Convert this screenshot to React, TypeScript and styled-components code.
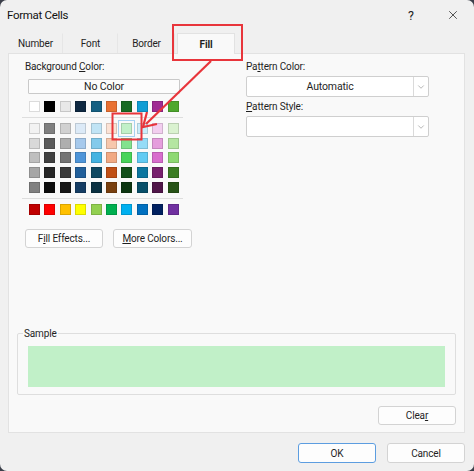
import React from "react";
import styled, { createGlobalStyle } from "styled-components";
import { ChevronDown, X } from "lucide-react";

const GlobalStyle = createGlobalStyle`
  html, body {
    margin: 0;
    padding: 0;
    background: #3b3f4a;
  }
  * {
    box-sizing: border-box;
  }
`;

const Dialog = styled.div`
  position: relative;
  width: 474px;
  height: 471px;
  background: #f0f0f0;
  border-radius: 7px;
  overflow: hidden;
  display: flex;
  flex-direction: column;
  font-family: "Roboto", "Noto Sans", sans-serif;
  font-size: 10px;
  letter-spacing: -0.15px;
  color: #1f1f1f;
`;

const TitleBar = styled.div`
  height: 30px;
  display: flex;
  align-items: center;
  padding: 0 14px 0 7px;
`;

const Title = styled.div`
  flex: 1;
  font-size: 11.5px;
  letter-spacing: -0.3px;
  color: #111;
`;

const TitleButton = styled.div<{ $width: number }>`
  width: ${(p) => p.$width}px;
  display: flex;
  justify-content: center;
  align-items: center;
  font-size: 12.5px;
  color: #222;
`;

const TabStrip = styled.div`
  margin: 3px 0 0 8px;
  height: 20px;
  display: flex;
  align-items: stretch;
  position: relative;
  z-index: 1;
`;

const Tab = styled.div<{ $width: number; $active?: boolean }>`
  width: ${(p) => p.$width}px;
  display: flex;
  align-items: center;
  justify-content: center;
  margin-left: ${(p) => (p.$active ? "2px" : "0")};
  background: ${(p) => (p.$active ? "#f9f9f9" : "transparent")};
  border: 1px solid ${(p) => (p.$active ? "#e2e2e2" : "transparent")};
  border-bottom: none;
  border-right: 1px solid ${(p) => (p.$active ? "#e2e2e2" : "#e6e6e6")};
  height: ${(p) => (p.$active ? "21px" : "20px")};
  font-weight: ${(p) => (p.$active ? 700 : 400)};
  color: #1f1f1f;
`;

const Panel = styled.div`
  margin: 0 9px 0 8px;
  height: 380px;
  background: #f9f9f9;
  border: 1px solid #e2e2e2;
  display: flex;
  flex-direction: column;
`;

const TopSection = styled.div`
  display: flex;
  padding-top: 6px;
  height: 196px;
`;

const LeftColumn = styled.div`
  width: 237px;
  padding-left: 16px;
  display: flex;
  flex-direction: column;
`;

const RightColumn = styled.div`
  width: 183px;
  display: flex;
  flex-direction: column;
`;

const Label = styled.div`
  height: 14px;
  line-height: 14px;
`;

const Button = styled.div<{ $width: number; $height?: number; $primary?: boolean }>`
  width: ${(p) => p.$width}px;
  height: ${(p) => p.$height ?? 19}px;
  display: flex;
  align-items: center;
  justify-content: center;
  background: #fdfdfd;
  border: 1px solid ${(p) => (p.$primary ? "#5c9de0" : "#d3d3d3")};
  border-radius: 3px;
`;

const NoColorButton = styled(Button)`
  margin: 5px 0 0 3px;
  border-radius: 1px;
  border-color: #c9c9c9;
  background: #fcfcfc;
  font-size: 10.5px;
`;

const SwatchGrid = styled.div<{ $rowGap: number; $top?: number }>`
  margin: ${(p) => p.$top ?? 0}px 0 0 4px;
  display: grid;
  grid-template-columns: repeat(10, 11px);
  column-gap: 4.4px;
  row-gap: ${(p) => p.$rowGap}px;
`;

const Swatch = styled.div<{ $color: string; $selected?: boolean }>`
  width: 11px;
  height: 11px;
  background: ${(p) => p.$color};
  box-shadow: inset 0 0 0 1px rgba(0, 0, 0, 0.14);
  outline: ${(p) => (p.$selected ? "1px solid #a7d2f2" : "none")};
  outline-offset: 2px;
`;

const Separator = styled.div`
  margin: 5px 0 5px -3px;
  width: 161px;
  height: 1px;
  background: #dedede;
`;

const ButtonRow = styled.div`
  display: flex;
  gap: 10px;
  margin-top: 14px;
`;

const Select = styled.div`
  margin-top: 2px;
  height: 21px;
  display: flex;
  background: #ffffff;
  border: 1px solid #cfcfcf;
  border-radius: 2px;
`;

const SelectValue = styled.div`
  flex: 1;
  display: flex;
  align-items: center;
  justify-content: center;
  font-size: 10.5px;
`;

const SelectArrow = styled.div`
  width: 15px;
  border-left: 1px solid #dadada;
  display: flex;
  align-items: center;
  justify-content: center;
  color: #707070;
`;

const SampleGroup = styled.fieldset`
  margin: 78px 8px 0 8px;
  padding: 7px 10px 6px 10px;
  height: 67px;
  border: 1px solid #dedede;
  border-radius: 2px;
`;

const SampleLegend = styled.legend`
  padding: 0 1px;
  margin-left: -5px;
  font-size: 10px;
`;

const SampleFill = styled.div<{ $color: string }>`
  height: 41px;
  background: ${(p) => p.$color};
`;

const ClearRow = styled.div`
  display: flex;
  justify-content: flex-end;
  padding-right: 8px;
  margin-top: 11px;
`;

const Footer = styled.div`
  display: flex;
  justify-content: flex-end;
  gap: 11px;
  padding: 10px 9px 0 0;
`;

const Annotation = styled.svg`
  position: absolute;
  left: 0;
  top: 0;
  pointer-events: none;
`;

const themeColumns: string[][] = [
  ["#FFFFFF", "#F2F2F2", "#D9D9D9", "#BFBFBF", "#A6A6A6", "#808080"],
  ["#000000", "#7F7F7F", "#595959", "#404040", "#262626", "#0D0D0D"],
  ["#E8E8E8", "#D1D1D1", "#AEAEAE", "#747474", "#3A3A3A", "#171717"],
  ["#0E2841", "#DCEAF7", "#A6C9EC", "#4E95D9", "#215F9A", "#153D64"],
  ["#156082", "#C0E4F5", "#83CAEB", "#44B3E1", "#104861", "#0A3041"],
  ["#E97132", "#FBE2D5", "#F7C7AC", "#F1A983", "#C04F15", "#783F0F"],
  ["#196B24", "#C1F0C8", "#83E28E", "#47D45A", "#124F1A", "#0C3511"],
  ["#0F9ED5", "#CAEEFB", "#95DCF7", "#61CBF3", "#0B76A0", "#074F69"],
  ["#A02B93", "#F2CEEF", "#E59EDD", "#D86DCD", "#77206D", "#501549"],
  ["#4EA72E", "#DAF2D0", "#B5E6A2", "#8ED973", "#3B7D23", "#275317"],
];

const standardColors = [
  "#C00000", "#FF0000", "#FFC000", "#FFFF00", "#92D050",
  "#00B050", "#00B0F0", "#0070C0", "#002060", "#7030A0",
];

const selected = { col: 6, row: 1 };

function App() {
  const tintRows = [1, 2, 3, 4, 5];

  return (
    <>
      <GlobalStyle />
      <Dialog>
        <TitleBar>
          <Title>Format Cells</Title>
          <TitleButton $width={14}>?</TitleButton>
          <TitleButton $width={42}>
            <X size={14} strokeWidth={1.3} color="#222" style={{ marginLeft: 28 }} />
          </TitleButton>
        </TitleBar>

        <TabStrip>
          <Tab $width={55}>Number</Tab>
          <Tab $width={55}>Font</Tab>
          <Tab $width={57}>Border</Tab>
          <Tab $width={58} $active>
            Fill
          </Tab>
        </TabStrip>

        <Panel>
          <TopSection>
            <LeftColumn>
              <Label>
                Background <u>C</u>olor:
              </Label>
              <NoColorButton $width={152} $height={15}>
                No Color
              </NoColorButton>
              <SwatchGrid $rowGap={0} $top={7}>
                {themeColumns.map((col, i) => (
                  <Swatch key={i} $color={col[0]} />
                ))}
              </SwatchGrid>
              <Separator />
              <SwatchGrid $rowGap={3.7}>
                {tintRows.map((r) =>
                  themeColumns.map((col, c) => (
                    <Swatch
                      key={`${r}-${c}`}
                      $color={col[r]}
                      $selected={r === selected.row && c === selected.col}
                    />
                  ))
                )}
              </SwatchGrid>
              <Separator />
              <SwatchGrid $rowGap={0}>
                {standardColors.map((c) => (
                  <Swatch key={c} $color={c} />
                ))}
              </SwatchGrid>
              <ButtonRow>
                <Button $width={78}>
                  F<u>i</u>ll Effects...
                </Button>
                <Button $width={79}>
                  <u>M</u>ore Colors...
                </Button>
              </ButtonRow>
            </LeftColumn>

            <RightColumn>
              <Label>
                Pa<u>t</u>tern Color:
              </Label>
              <Select>
                <SelectValue>Automatic</SelectValue>
                <SelectArrow>
                  <ChevronDown size={10} strokeWidth={1.2} />
                </SelectArrow>
              </Select>
              <Label style={{ marginTop: 3 }}>
                <u>P</u>attern Style:
              </Label>
              <Select>
                <SelectValue />
                <SelectArrow>
                  <ChevronDown size={10} strokeWidth={1.2} />
                </SelectArrow>
              </Select>
            </RightColumn>
          </TopSection>

          <SampleGroup>
            <SampleLegend>Sample</SampleLegend>
            <SampleFill $color={themeColumns[selected.col][selected.row]} />
          </SampleGroup>

          <ClearRow>
            <Button $width={78}>
              Clea<u>r</u>
            </Button>
          </ClearRow>
        </Panel>

        <Footer>
          <Button $width={78} $height={20} $primary>
            OK
          </Button>
          <Button $width={78} $height={20}>
            Cancel
          </Button>
        </Footer>

        <Annotation width={474} height={471} viewBox="0 0 474 471">
          <rect x={173} y={25} width={69} height={35} fill="none" stroke="#e8353b" strokeWidth={2} />
          <rect x={112.5} y={113.5} width={29} height={26} fill="none" stroke="#e8353b" strokeWidth={2} />
          <line x1={211} y1={61} x2={146} y2={124} stroke="#e8353b" strokeWidth={2.2} />
          <polyline
            points="147,112 143,127 157,124"
            fill="none"
            stroke="#e8353b"
            strokeWidth={2.2}
            strokeLinejoin="miter"
          />
        </Annotation>
      </Dialog>
    </>
  );
}

export default App;
